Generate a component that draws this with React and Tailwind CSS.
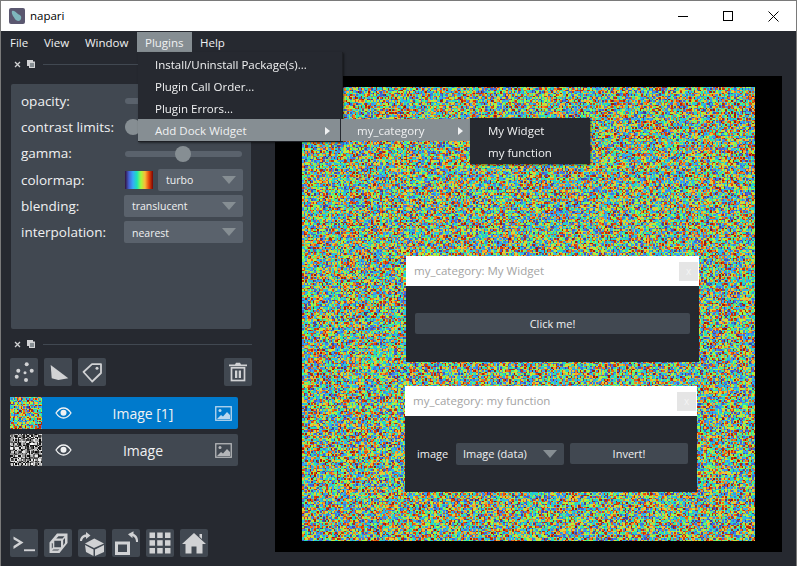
import React, { useEffect, useRef } from "react";

const turboStops = [
  [48, 18, 59],
  [70, 98, 215],
  [54, 170, 249],
  [26, 228, 182],
  [162, 252, 60],
  [250, 187, 58],
  [228, 70, 10],
  [122, 4, 3],
];

const turbo = t => {
  const p = t * (turboStops.length - 1);
  const i = Math.min(Math.floor(p), turboStops.length - 2);
  const f = p - i;
  return turboStops[i].map((c, k) => c + (turboStops[i + 1][k] - c) * f);
};

// Small seeded generator so the noise is the same on every load
const makeRandom = seed => {
  let s = seed;
  return () => {
    s = (s * 1664525 + 1013904223) % 4294967296;
    return s / 4294967296;
  };
};

const Noise = ({ width, height, seed, gray, className }) => {
  const ref = useRef(null);

  useEffect(() => {
    const ctx = ref.current.getContext("2d");
    const img = ctx.createImageData(width, height);
    const random = makeRandom(seed);
    for (let i = 0; i < width * height; i++) {
      const v = random();
      const c = gray ? [v * 255, v * 255, v * 255] : turbo(0.08 + v * 0.88);
      img.data[i * 4] = c[0];
      img.data[i * 4 + 1] = c[1];
      img.data[i * 4 + 2] = c[2];
      img.data[i * 4 + 3] = 255;
    }
    ctx.putImageData(img, 0, 0);
  }, [width, height, seed, gray]);

  return <canvas ref={ref} width={width} height={height} className={className} />;
};

const Chevron = () => (
  <span className="w-0 h-0 border-y-[4px] border-y-transparent border-l-[5px] border-l-[#f0f1f2]" />
);

const ComboArrow = () => (
  <span className="w-0 h-0 border-x-[7px] border-x-transparent border-t-[8px] border-t-[#868e93]" />
);

const Combo = ({ label, className }) => (
  <div className={`h-[22px] rounded-[2px] bg-[#5a626c] flex items-center justify-between pl-[8px] pr-[7px] text-[10.5px] ${className}`}>
    <span className="pt-[2px]">{label}</span>
    <ComboArrow />
  </div>
);

const Row = ({ label, children }) => (
  <div className="flex items-center h-[22px] mb-[4.3px]">
    <div className="w-[103px] shrink-0 text-[13.5px]">{label}</div>
    <div className="flex-1 flex items-center min-w-0">{children}</div>
  </div>
);

const Slider = ({ thumb }) => (
  <div className="relative w-[117px] h-[6px] ml-[1px] rounded-[3px] bg-[#5a626c]">
    <div className={`absolute top-[-5px] w-[16px] h-[16px] rounded-full bg-[#868e93] ${thumb}`} />
  </div>
);

const DockTitle = () => (
  <div className="flex items-center h-[14px] pl-[13px] pr-[23px] gap-[6px]">
    <svg width="7" height="7" viewBox="0 0 7 7" stroke="#d1d2d4" strokeWidth="1.3">
      <path d="M1 1l5 5M6 1l-5 5" />
    </svg>
    <svg width="8" height="8" viewBox="0 0 8 8" fill="#d1d2d4">
      <path d="M0 0h6v1.5H8V8H2V6H0z" />
      <path d="M3 3h4v4H3z" fill="#868e93" />
    </svg>
    <div className="flex-1 h-[1px] bg-[#414851] ml-[2px]" />
  </div>
);

const IconButton = ({ children, className = "" }) => (
  <div className={`w-[28px] h-[28px] rounded-[2px] bg-[#414851] flex items-center justify-center ${className}`}>
    <svg width="28" height="28" viewBox="0 0 28 28" fill="#d1d2d4">
      {children}
    </svg>
  </div>
);

const Eye = () => (
  <svg width="17" height="12" viewBox="0 0 17 12" fill="none" stroke="#f0f1f2" className="shrink-0">
    <path d="M1 6c2-3 4.500-5 7.500-5s5.500 2 7.500 5c-2 3-4.500 5-7.500 5S3 9 1 6z" strokeWidth="1.300" />
    <circle cx="8.500" cy="5.800" r="3" fill="#f0f1f2" stroke="none" />
  </svg>
);

const ImageIcon = ({ stroke, fill }) => (
  <svg width="17" height="15" viewBox="0 0 17 15" className="shrink-0">
    <rect x="0.750" y="0.750" width="15.500" height="13.500" fill="none" stroke={stroke} strokeWidth="1.300" />
    <circle cx="5" cy="4.500" r="1.500" fill={fill} />
    <path d="M2 13l4-4 2 1.500 4-4.500 3 3v4z" fill={fill} />
  </svg>
);

const LayerRow = ({ name, active, seed, gray }) => (
  <div className={`relative flex items-center h-[32px] w-[228px] rounded-[2px] ${active ? "bg-[#007acc]" : "bg-[#414851]"}`}>
    <Noise width={24} height={24} seed={seed} gray={gray} className="w-[32px] h-[32px] [image-rendering:pixelated]" />
    <div className="ml-[13px]">
      <Eye />
    </div>
    <div className="flex-1 text-center text-[14px] pr-[1px]">{name}</div>
    <div className="mr-[6px]">
      <ImageIcon stroke={active ? "#b9d8ef" : "#b4b6b9"} fill={active ? "#b9d8ef" : "#b4b6b9"} />
    </div>
  </div>
);

const CloseBox = () => (
  <div className="w-[19px] h-[19px] bg-[#e5e5e5] flex items-center justify-center text-[10px] leading-none text-[#f4f4f4]">
    x
  </div>
);

const DockWidget = ({ title, className, children }) => (
  <div className={`absolute h-[106px] flex flex-col bg-[#262930] ${className}`}>
    <div className="h-[30px] shrink-0 bg-white flex items-center justify-between pl-[8px] pr-[1px] text-[11.5px] text-[#a3a3a3]">
      <span>{title}</span>
      <CloseBox />
    </div>
    {children}
  </div>
);

const App = () => {
  return (
    <div className="w-[797px] h-[566px] overflow-hidden flex flex-col border-l border-r border-t border-[#7a7a7a] bg-[#262930] text-[#f0f1f2] font-['Open_Sans','Noto_Sans',sans-serif]">
      {/* title bar */}
      <div className="h-[30px] shrink-0 bg-white flex items-center text-black text-[11.5px]">
        <svg width="16" height="16" viewBox="0 0 16 16" className="ml-[8px] mr-[5px]">
          <rect width="16" height="16" rx="2" fill="#5b5870" />
          <path d="M3 3c3-1 4 2 6 3s4 2 3 5-5 2-6 0-4-5-3-8z" fill="#7fb7bd" />
        </svg>
        <span>napari</span>
        <div className="ml-auto flex h-full items-center">
          <div className="w-[45px] flex justify-center">
            <div className="w-[10px] h-[1px] bg-black" />
          </div>
          <div className="w-[45px] flex justify-center">
            <div className="w-[10px] h-[10px] border border-black" />
          </div>
          <div className="w-[46px] flex justify-center">
            <svg width="11" height="11" viewBox="0 0 11 11" stroke="black" strokeWidth="1">
              <path d="M0.500 0.500l10 10M10.500 0.500l-10 10" />
            </svg>
          </div>
        </div>
      </div>

      {/* menu bar */}
      <div className="relative z-10 h-[21px] shrink-0 flex items-center text-[11.5px]">
        <div className="w-[35px] pl-[9px] pt-[2px]">File</div>
        <div className="w-[41px] pl-[8px] pt-[2px]">View</div>
        <div className="w-[60px] pl-[8px] pt-[2px]">Window</div>
        <div className="relative mt-[1px]">
          <div className="h-[20px] w-[55px] pl-[8px] pt-[1px] flex items-center bg-[#868e93]">Plugins</div>
          <div className="absolute left-[1px] top-full w-[205px] h-[90px] pt-[1px] bg-[#262930] border-b border-r border-[#1d1f24] shadow-[1px_1px_2px_rgba(0,0,0,0.5)] flex flex-col">
            <div className="h-[22px] flex items-center pl-[17px] pt-[1px]">Install/Uninstall Package(s)...</div>
            <div className="h-[22px] flex items-center pl-[17px] pt-[1px]">Plugin Call Order...</div>
            <div className="h-[22px] flex items-center pl-[17px] pt-[1px]">Plugin Errors...</div>
            <div className="relative h-[22px] w-[202px] flex items-center justify-between pl-[17px] pr-[10px] pt-[1px] bg-[#868e93]">
              <span>Add Dock Widget</span>
              <Chevron />
              <div className="absolute left-[202px] top-0 w-[130px] h-[22px] flex items-center justify-between pl-[16px] pr-[7px] pt-[1px] bg-[#868e93] border-l border-[#262930]">
                <span>my_category</span>
                <Chevron />
                <div className="absolute left-[129px] top-[-1px] w-[120px] h-[46px] pt-[1px] bg-[#262930] shadow-[1px_1px_2px_rgba(0,0,0,0.5)]">
                  <div className="h-[22px] flex items-center pl-[18px] pt-[1px]">My Widget</div>
                  <div className="h-[22px] flex items-center pl-[18px] pt-[1px]">my function</div>
                </div>
              </div>
            </div>
          </div>
        </div>
        <div className="pl-[8px] pt-[2px]">Help</div>
      </div>

      <div className="flex-1 flex min-h-0">
        {/* left docks */}
        <div className="w-[274px] shrink-0 flex flex-col pt-[5px] pb-[9px]">
          <DockTitle />
          <div className="ml-[10px] mt-[13px] w-[240px] h-[245px] rounded-[2px] bg-[#414851] pt-[6px] pl-[10px] pr-[8px]">
            <Row label="opacity:">
              <Slider thumb="right-0" />
            </Row>
            <Row label="contrast limits:">
              <Slider thumb="left-0" />
            </Row>
            <Row label="gamma:">
              <Slider thumb="left-[50px]" />
            </Row>
            <Row label="colormap:">
              <div className="w-[28px] h-[18px] ml-[1px] mr-[5px] shrink-0 bg-[linear-gradient(to_right,#30123b,#4662d7,#36aaf9,#1ae4b6,#a2fc3c,#fabb3a,#e4460a,#7a0403)]" />
              <Combo label="turbo" className="w-[85px]" />
            </Row>
            <Row label="blending:">
              <Combo label="translucent" className="w-[119px]" />
            </Row>
            <Row label="interpolation:">
              <Combo label="nearest" className="w-[119px]" />
            </Row>
          </div>

          <div className="mt-[8px]">
            <DockTitle />
          </div>
          <div className="flex ml-[9px] mt-[7px] w-[242px]">
            <IconButton>
              <circle cx="16.700" cy="6.300" r="2" />
              <circle cx="8.300" cy="12.700" r="2" />
              <circle cx="21.700" cy="12.700" r="2" />
              <circle cx="15" cy="14.700" r="1.500" />
              <circle cx="6.700" cy="18.700" r="2" />
              <circle cx="16" cy="22" r="2" />
            </IconButton>
            <IconButton className="ml-[6px]">
              <path d="M6.700 7L24.300 20.300 14.300 22 7.700 20.300z" />
            </IconButton>
            <IconButton className="ml-[6px]">
              <path d="M5.500 14L14 6.200h9V15l-8.800 8.500z" fill="none" stroke="#d1d2d4" strokeWidth="1.800" strokeLinejoin="round" />
              <circle cx="19" cy="10.300" r="1.500" />
            </IconButton>
            <IconButton className="ml-auto">
              <path d="M5 6.500h6l1-1.700h4l1 1.700h6v1.800H5z" />
              <rect x="7.500" y="9.800" width="13" height="12.700" fill="none" stroke="#d1d2d4" strokeWidth="1.700" />
              <path d="M11 12.500h2.300v7.500H11zM14.700 12.500H17v7.500h-2.300z" />
            </IconButton>
          </div>
          <div className="ml-[9px] mt-[11px] flex flex-col gap-[5px]">
            <LayerRow name="Image [1]" active seed={11} />
            <LayerRow name="Image" seed={23} gray />
          </div>

          <div className="flex gap-[6px] ml-[9px] mt-auto">
            <IconButton>
              <path d="M3.500 7.500l10 6-10 6.500v-3l5.500-3.500-5.500-3.200z" />
              <path d="M14 20.300h11v1.900H14z" />
            </IconButton>
            <IconButton>
              <path
                d="M13 4.500h10.500V14L15.500 24H5.500V13.500zM14.500 7.300l-2.300 2.200h6.300l2-2.200zM21 9l-1.800 2v5.500l1.800-2.500zM10.300 11.800h6.700v6.500h-6.700zM7.800 14v5.500l1-1V14.500zM9.500 20.500l-1.500 1h6l1.500-1z"
                fillRule="evenodd"
              />
            </IconButton>
            <IconButton>
              <path d="M16.300 9.500L7 14.500l9 4.500 10-4.500z" />
              <path d="M7 16l8.500 4.500V27L8 23zM17 20.500L26 16v7l-9 4z" />
              <path d="M2 12c0-4 3-6.500 6-6.500V3l4.500 3.500L8 10V8C6 8 4.500 9.500 4 12z" />
            </IconButton>
            <IconButton>
              <path d="M3 12.500h15V26H3zM6 15.500v7.500h9v-7.500z" fillRule="evenodd" />
              <path d="M24 13c0-3-1.200-5-3.500-6v2.300l-4.500-4 5.500-3v2.500c3 1 5 4.500 4.500 8.200z" />
            </IconButton>
            <IconButton>
              {[3.500, 11.200, 19].map(y =>
                [3.500, 11.200, 19].map(x => <rect key={`${x}-${y}`} x={x} y={y} width="5.500" height="5.500" />)
              )}
            </IconButton>
            <IconButton>
              <path d="M14 4L26 15h-3.500v9.500h-6v-7h-5v7h-6V15H2z" />
              <path d="M19.500 5H22v5l-2.500-2.300z" />
            </IconButton>
          </div>
        </div>

        {/* canvas */}
        <div className="relative flex-1 mt-[24px] mb-[14px] mr-[14px] bg-black flex items-center justify-center">
          <Noise width={302} height={303} seed={7} className="w-[453px] h-[454px] [image-rendering:pixelated]" />

          <DockWidget title="my_category: My Widget" className="left-[131px] top-[180px] w-[293px]">
            <div className="flex-1 flex items-center justify-center pb-[1px]">
              <div className="w-[275px] h-[21px] pt-[1px] rounded-[2px] bg-[#414851] flex items-center justify-center text-[11px]">
                Click me!
              </div>
            </div>
          </DockWidget>

          <DockWidget title="my_category: my function" className="left-[130px] top-[310px] w-[292px]">
            <div className="flex-1 flex items-center pl-[12px] pb-[1px] text-[11px]">
              <span className="w-[39px] pt-[1px]">image</span>
              <div className="w-[108px] h-[22px] rounded-[2px] bg-[#414851] flex items-center justify-between pl-[7px] pr-[7px]">
                <span className="pt-[1px]">Image (data)</span>
                <ComboArrow />
              </div>
              <div className="ml-[6px] w-[118px] h-[21px] pt-[1px] rounded-[2px] bg-[#414851] flex items-center justify-center">
                Invert!
              </div>
            </div>
          </DockWidget>
        </div>
      </div>
    </div>
  );
};

export default App;
